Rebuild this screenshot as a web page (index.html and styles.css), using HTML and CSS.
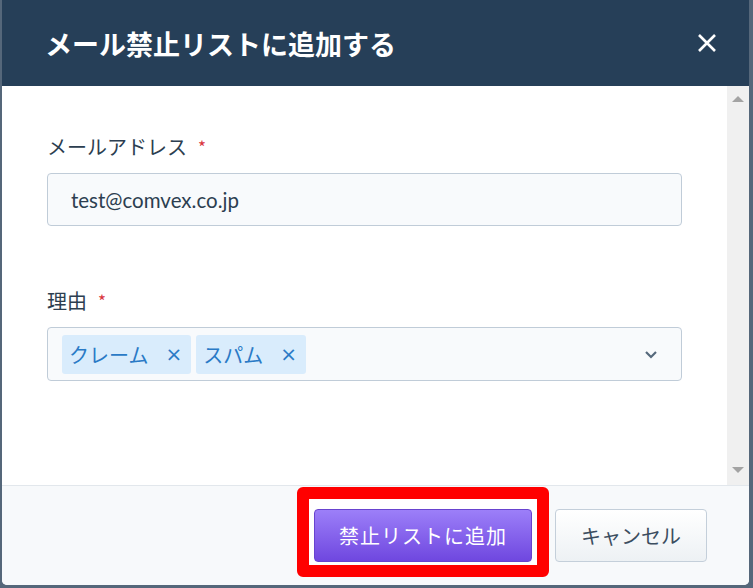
FILE: index.html
```html
<!DOCTYPE html>
<html lang="ja">
<head>
  <meta charset="UTF-8">
  <meta name="viewport" content="width=device-width, initial-scale=1.0">
  <title>メール禁止リストに追加する</title>
  <link rel="stylesheet" href="styles.css">
</head>
<body>
  <div class="modal">
    <div class="modal-header">
      <h1 class="modal-title">メール禁止リストに追加する</h1>
      <button class="close" aria-label="閉じる">
        <svg width="20" height="20" viewBox="0 0 20 20">
          <path d="M2 2 L18 18 M18 2 L2 18" stroke="#fff" stroke-width="2.6" fill="none"/>
        </svg>
      </button>
    </div>

    <div class="modal-body">
      <div class="content">
        <div class="field">
          <label class="label">メールアドレス<span class="req">*</span></label>
          <div class="input">test@comvex.co.jp</div>
        </div>

        <div class="field">
          <label class="label">理由<span class="req">*</span></label>
          <div class="select">
            <span class="tag">クレーム<span class="tag-x">×</span></span>
            <span class="tag">スパム<span class="tag-x">×</span></span>
            <svg class="chevron" width="14" height="9" viewBox="0 0 14 9">
              <path d="M2 2 L7 7 L12 2" stroke="#56697c" stroke-width="2.2" fill="none"/>
            </svg>
          </div>
        </div>
      </div>
      <div class="scrollbar">
        <span class="arrow up"></span>
        <span class="arrow down"></span>
      </div>
    </div>

    <div class="modal-footer">
      <span class="highlight">
        <button class="btn btn-primary">禁止リストに追加</button>
      </span>
      <button class="btn btn-cancel">キャンセル</button>
    </div>
  </div>
</body>
</html>
```

FILE: styles.css
```css
body {
  margin: 0;
  background-color: #55677a;
  font-family: "Noto Sans CJK JP", "Noto Sans", sans-serif;
  color: #2c3e50;
}

.modal {
  width: 747px;
  height: 585px;
  margin-left: 2px;
  background-color: #fff;
  border-radius: 0 0 5px 5px;
  overflow: hidden;
  display: flex;
  flex-direction: column;
}

.modal-header {
  height: 86px;
  flex-shrink: 0;
  background-color: #263f58;
  padding: 0 32px 0 43px;
  display: flex;
  align-items: center;
  justify-content: space-between;
}

.modal-title {
  margin: 0;
  color: #fff;
  font-size: 27px;
  font-weight: bold;
  line-height: 1;
}

.close {
  background: none;
  border: none;
  padding: 0;
  width: 20px;
  height: 20px;
  cursor: pointer;
}

.modal-body {
  height: 399px;
  display: flex;
}

.content {
  flex: 1;
  padding: 47px 45px 0 45px;
}

.field {
  margin-bottom: 61px;
}

.label {
  display: block;
  font-size: 20px;
  line-height: 28px;
  margin-bottom: 12px;
  color: #2c3e50;
}

.req {
  color: #d9363e;
  font-size: 17px;
  margin-left: 11px;
  vertical-align: top;
}

.input {
  height: 53px;
  box-sizing: border-box;
  border: 1px solid #c0ccd8;
  border-radius: 4px;
  background-color: #f8fafc;
  padding: 0 23px;
  display: flex;
  align-items: center;
  font-family: "Lato", "Noto Sans CJK JP", sans-serif;
  font-size: 20.5px;
  color: #2c3e50;
}

.select {
  position: relative;
  height: 54px;
  box-sizing: border-box;
  border: 1px solid #c0ccd8;
  border-radius: 4px;
  background-color: #f8fafc;
  padding: 0 14px;
  display: flex;
  align-items: center;
  gap: 5px;
}

.tag {
  height: 39px;
  display: flex;
  align-items: center;
  padding: 0 9px 0 7px;
  background-color: #d9ecfc;
  border-radius: 3px;
  color: #2a7ac6;
  font-size: 20px;
}

.tag-x {
  margin-left: 17px;
  font-family: "DejaVu Sans", sans-serif;
  font-size: 20px;
}

.chevron {
  margin-left: auto;
  margin-right: 9px;
}

.scrollbar {
  width: 22px;
  background-color: #f0f0f0;
  display: flex;
  flex-direction: column;
  justify-content: space-between;
  align-items: center;
  padding: 10px 0 12px;
  box-sizing: border-box;
}

.arrow {
  width: 0;
  height: 0;
  border-left: 6px solid transparent;
  border-right: 6px solid transparent;
}

.arrow.up {
  border-bottom: 6px solid #a3a3a3;
}

.arrow.down {
  border-top: 6px solid #a3a3a3;
}

.modal-footer {
  flex: 1;
  background-color: #f7f9fb;
  border-top: 1px solid #e2e7ec;
  display: flex;
  align-items: center;
  justify-content: flex-end;
  gap: 23px;
  padding-right: 42px;
}

.highlight {
  position: relative;
  z-index: 0;
  display: flex;
}

.highlight::before {
  content: "";
  position: absolute;
  top: -22px;
  left: -17px;
  right: -17px;
  bottom: -15px;
  border: 12px solid #ff0000;
  border-radius: 6px;
  background-color: #fff;
  z-index: -1;
}

.btn {
  height: 53px;
  border-radius: 4px;
  font-family: "Noto Sans CJK JP", sans-serif;
  font-size: 20px;
  cursor: pointer;
}

.btn-primary {
  padding: 0 24px;
  letter-spacing: 1px;
  color: #fff;
  border: 1px solid #6843cf;
  background: linear-gradient(#9c7ff9, #6f47df);
}

.btn-cancel {
  padding: 0 25px;
  color: #3b4d5f;
  border: 1px solid #c4cfda;
  background: linear-gradient(#ffffff, #edf1f4);
}
```
